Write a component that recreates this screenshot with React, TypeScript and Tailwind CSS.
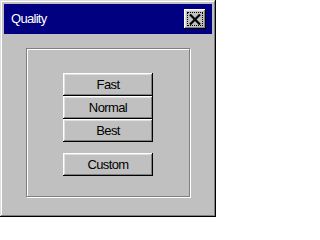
const buttonClass =
  "flex h-[23px] w-[90px] items-center justify-center bg-[#c0c0c0] text-[13px] text-black shadow-[inset_-1px_-1px_#000,inset_1px_1px_#fff,inset_-2px_-2px_#808080,inset_2px_2px_#dfdfdf]";

const App = () => {
  return (
    <div className="h-[217px] w-[216px] bg-[#c0c0c0] p-1 font-['Liberation_Sans',Arial,sans-serif] shadow-[inset_-1px_-1px_#000,inset_1px_1px_#dfdfdf,inset_-2px_-2px_#808080,inset_2px_2px_#fff]">
      {/* title bar */}
      <div className="flex h-[30px] items-center justify-between bg-[#000080] pl-[7px] pr-[6px]">
        <span className="text-[13px] tracking-[-0.7px] text-white">Quality</span>
        <button className="flex h-[20px] w-[22px] items-center justify-center bg-[#c0c0c0] p-[3px] shadow-[inset_-1px_-1px_#000,inset_1px_1px_#fff,inset_-2px_-2px_#808080,inset_2px_2px_#dfdfdf]">
          <span className="flex h-full w-full items-center justify-center border border-dotted border-black">
            <svg width="12" height="11" viewBox="0 0 12 11">
              <path d="M1 0.5 L11 10.5 M11 0.5 L1 10.5" stroke="#000" strokeWidth="2.2" />
            </svg>
          </span>
        </button>
      </div>

      {/* group box */}
      <div className="ml-[22px] mt-[14px] flex h-[149px] w-[164px] flex-col items-center border border-[#808080] pt-[24px] shadow-[inset_1px_1px_#fff,1px_1px_#fff]">
        <div className="flex flex-col tracking-[-0.6px]">
          <button className={buttonClass}>Fast</button>
          <button className={buttonClass}>Normal</button>
          <button className={buttonClass}>Best</button>
          <button className={`${buttonClass} mt-[11px]`}>Custom</button>
        </div>
      </div>
    </div>
  );
};

export default App;
